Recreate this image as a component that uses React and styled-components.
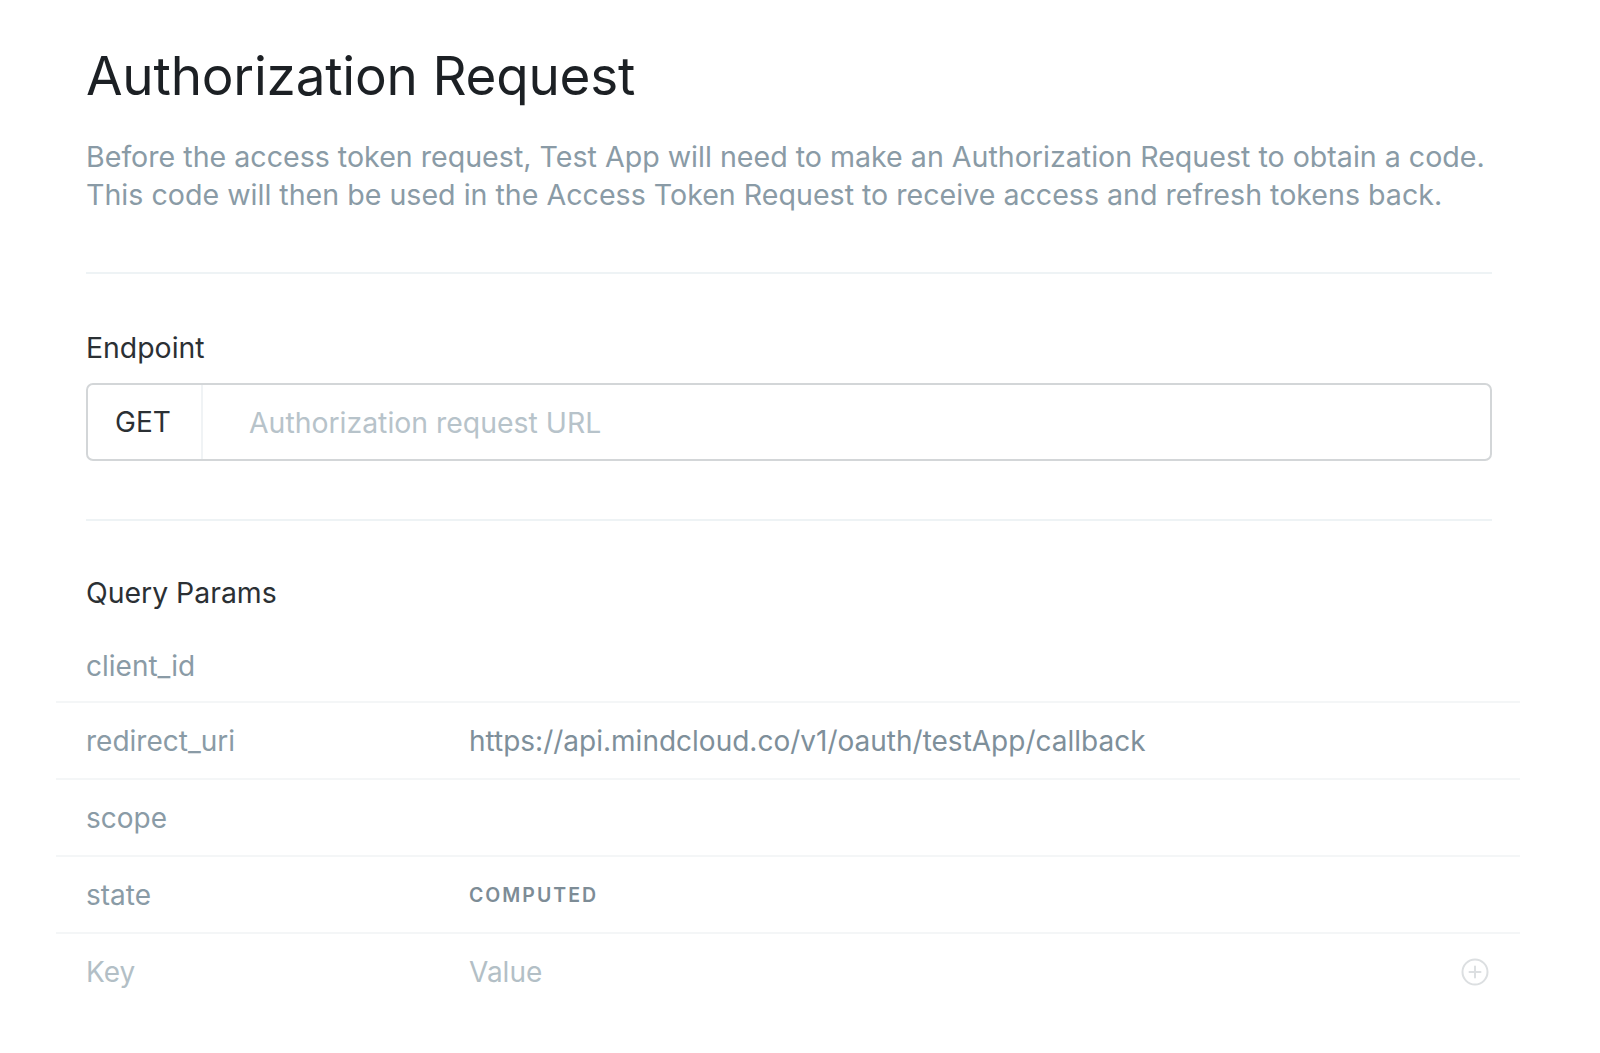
import React from 'react';
import styled, { createGlobalStyle } from 'styled-components';

const GlobalStyle = createGlobalStyle`
  html, body {
    margin: 0;
    padding: 0;
    background: #ffffff;
  }
  body {
    font-family: Inter, "Noto Sans", "Liberation Sans", sans-serif;
    -webkit-font-smoothing: antialiased;
  }
`;

const Page = styled.div`
  padding: 44px 108px 40px 86px;
  width: 1406px;
`;

const Title = styled.h1`
  margin: 0;
  font-size: 53px;
  line-height: 64px;
  font-weight: 400;
  color: #1c2024;
  letter-spacing: -0.2px;
`;

const Description = styled.p`
  margin: 30px 0 0;
  font-size: 28.6px;
  line-height: 38px;
  color: #8a9ba6;
`;

const Divider = styled.hr`
  border: 0;
  height: 2px;
  background: #eef3f5;
  margin: ${p => (p.$second ? '58px 0 56px' : '58px 0')};
`;

const Label = styled.div`
  font-size: 28.4px;
  line-height: 32px;
  color: #2b3034;
`;

const InputGroup = styled.div`
  margin-top: 19px;
  display: flex;
  height: 78px;
  border: 2px solid #d3d6d8;
  border-radius: 7px;
  box-sizing: border-box;
  overflow: hidden;
`;

const Method = styled.div`
  width: 115px;
  display: flex;
  align-items: center;
  padding-left: 27px;
  box-sizing: border-box;
  border-right: 2px solid #f0f3f5;
  font-size: 28px;
  color: #2b3034;
`;

const UrlInput = styled.input`
  flex: 1;
  border: 0;
  outline: none;
  padding: 0 0 0 46px;
  font-family: inherit;
  font-size: 28.4px;
  color: #2b3034;
  background: transparent;

  &::placeholder {
    color: #b7c3ca;
  }
`;

const ParamTable = styled.div`
  margin: 17px -28px 0 -30px;
`;

const Row = styled.div`
  display: grid;
  grid-template-columns: 383px 1fr 40px;
  align-items: center;
  height: ${p => (p.$first ? '70px' : '75px')};
  padding: ${p => (p.$first ? '5px 28px 0 30px' : '0 28px 0 30px')};
  border-top: ${p => (p.$first ? '0' : '2px solid #f4f6f7')};
`;

const Key = styled.div`
  font-size: 28px;
  color: ${p => (p.$placeholder ? '#b3bfc6' : '#8a9ba6')};
`;

const Value = styled.div`
  font-size: 28px;
  color: ${p => (p.$placeholder ? '#b3bfc6' : '#7e8f9a')};
`;

const Computed = styled.span`
  font-size: 19.5px;
  font-weight: 600;
  letter-spacing: 2px;
  text-transform: uppercase;
  color: #7d8c96;
`;

const AddButton = styled.button`
  justify-self: end;
  width: 30px;
  height: 30px;
  padding: 0;
  margin-right: 2px;
  border: 0;
  background: none;
  display: flex;
  align-items: center;
  justify-content: center;
`;

const PlusCircle = () => (
  <svg width="28" height="28" viewBox="0 0 28 28" fill="none">
    <circle cx="14" cy="14" r="12.5" stroke="#dcdfe1" strokeWidth="2" />
    <path d="M14 8.5v11M8.5 14h11" stroke="#dcdfe1" strokeWidth="2" strokeLinecap="round" />
  </svg>
);

const params = [
  { key: 'client_id', value: '' },
  { key: 'redirect_uri', value: 'https://api.mindcloud.co/v1/oauth/testApp/callback' },
  { key: 'scope', value: '' },
  { key: 'state', computed: true },
];

export default function App() {
  return (
    <>
      <GlobalStyle />
      <Page>
        <Title>Authorization Request</Title>
        <Description>
          Before the access token request, Test App will need to make an Authorization Request to obtain a code.
          <br />
          This code will then be used in the Access Token Request to receive access and refresh tokens back.
        </Description>

        <Divider />

        <Label>Endpoint</Label>
        <InputGroup>
          <Method>GET</Method>
          <UrlInput placeholder="Authorization request URL" />
        </InputGroup>

        <Divider $second />

        <Label>Query Params</Label>
        <ParamTable>
          {params.map((p, i) => (
            <Row key={p.key} $first={i === 0}>
              <Key>{p.key}</Key>
              {p.computed ? <div><Computed>Computed</Computed></div> : <Value>{p.value}</Value>}
              <span />
            </Row>
          ))}
          <Row>
            <Key $placeholder>Key</Key>
            <Value $placeholder>Value</Value>
            <AddButton aria-label="Add param">
              <PlusCircle />
            </AddButton>
          </Row>
        </ParamTable>
      </Page>
    </>
  );
}
